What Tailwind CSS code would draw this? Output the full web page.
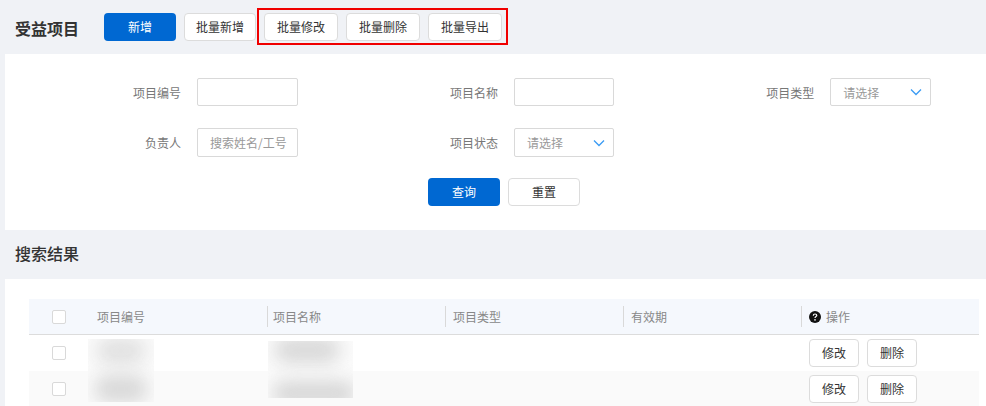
<!DOCTYPE html>
<html lang="zh-CN">
<head>
    <meta charset="utf-8">
    <meta name="viewport" content="width=device-width, initial-scale=1.0">
    <title>受益项目</title>
    <script src="https://cdn.jsdelivr.net/npm/@tailwindcss/browser@4"></script>
</head>
<body class="h-[406px] overflow-hidden bg-[#f0f2f6] font-['Noto_Sans_CJK_SC','Liberation_Sans',sans-serif] text-xs text-[#333]">

<!-- 受益项目 header -->
<header class="flex h-[54px] items-start">
    <h1 class="ml-[15px] mt-[17px] w-[89px] text-base leading-[22px] font-bold text-[#333]">受益项目</h1>
    <button class="mt-[13px] h-[28px] w-[72px] rounded-[4px] bg-[#0068d2] text-white">新增</button>
    <button class="ml-[8px] mt-[13px] h-[28px] w-[72px] rounded-[4px] border border-[#dcdcdc] bg-white">批量新增</button>
    <div class="ml-[1px] mt-[8px] flex h-[37px] w-[251px] gap-[8px] border-2 border-[#f00000] pl-[5px] pt-[3px]">
        <button class="h-[28px] w-[74px] rounded-[4px] border border-[#dcdcdc] bg-white">批量修改</button>
        <button class="h-[28px] w-[74px] rounded-[4px] border border-[#dcdcdc] bg-white">批量删除</button>
        <button class="h-[28px] w-[74px] rounded-[4px] border border-[#dcdcdc] bg-white">批量导出</button>
    </div>
</header>

<!-- 查询表单 -->
<section class="ml-[5px] h-[176px] bg-white pt-[24px]">
    <div class="grid grid-cols-[293px_317px_316px] grid-rows-[28px_29px] gap-y-[22px]">
        <div class="flex items-center">
            <label class="w-[176px] pt-[1px] text-right text-[#777]">项目编号</label>
            <input class="ml-[16px] h-[28px] w-[101px] rounded-[2px] border border-[#d9d9d9] bg-white">
        </div>
        <div class="flex items-center">
            <label class="w-[200px] pt-[1px] text-right text-[#777]">项目名称</label>
            <input class="ml-[16px] h-[28px] w-[100px] rounded-[2px] border border-[#d9d9d9] bg-white">
        </div>
        <div class="flex items-center">
            <label class="w-[200px] pt-[1px] text-right text-[#777]">项目类型</label>
            <div class="ml-[16px] flex h-[28px] w-[101px] items-center justify-between rounded-[2px] border border-[#d9d9d9] pl-[12px] pr-[8px] text-[#999]">
                <span class="pt-[1px]">请选择</span>
                <svg width="12" height="8" viewBox="0 0 12 8" fill="none" stroke="#3a9bf4" stroke-width="1.3"><path d="M1 1.5 L6 6.5 L11 1.5"/></svg>
            </div>
        </div>
        <div class="flex items-center">
            <label class="w-[176px] text-right text-[#777]">负责人</label>
            <input class="ml-[16px] h-[29px] w-[101px] rounded-[2px] border border-[#d9d9d9] bg-white pl-[12px] text-xs placeholder:text-[#999]" placeholder="搜索姓名/工号">
        </div>
        <div class="flex items-center">
            <label class="w-[200px] text-right text-[#777]">项目状态</label>
            <div class="ml-[16px] flex h-[29px] w-[100px] items-center justify-between rounded-[2px] border border-[#d9d9d9] pl-[12px] pr-[8px] text-[#999]">
                <span>请选择</span>
                <svg width="12" height="8" viewBox="0 0 12 8" fill="none" stroke="#3a9bf4" stroke-width="1.3"><path d="M1 1.5 L6 6.5 L11 1.5"/></svg>
            </div>
        </div>
    </div>
    <div class="mt-[21px] flex gap-[8px] pl-[423px]">
        <button class="h-[28px] w-[72px] rounded-[4px] bg-[#0068d2] text-white">查询</button>
        <button class="h-[28px] w-[72px] rounded-[4px] border border-[#dcdcdc] bg-white">重置</button>
    </div>
</section>

<!-- 搜索结果 -->
<div class="flex h-[49px] items-start pl-[15px] pt-[12px]">
    <h2 class="text-base leading-[22px] font-medium text-[#333]">搜索结果</h2>
</div>

<section class="relative ml-[5px] h-[127px] bg-white pl-[24px] pr-[7px] pt-[20px]">
    <div class="grid h-[36px] grid-cols-[68px_170px_178px_178px_178px_178px] items-center border-b border-[#dcdcdc] bg-[#f5f8fd] text-[#888]">
        <div class="pl-[23px]"><span class="block h-[14px] w-[14px] rounded-[2px] border border-[#d9d9d9] bg-white"></span></div>
        <div>项目编号</div>
        <div class="flex h-[21px] items-center border-l border-[#d9d9d9] pl-[5px]">项目名称</div>
        <div class="flex h-[21px] items-center border-l border-[#d9d9d9] pl-[7px]">项目类型</div>
        <div class="flex h-[21px] items-center border-l border-[#d9d9d9] pl-[7px]">有效期</div>
        <div class="flex h-[21px] items-center gap-[5px] border-l border-[#d9d9d9] pl-[7px]">
            <svg width="12" height="12" viewBox="0 0 12 12"><circle cx="6" cy="6" r="6" fill="#111"/><path d="M4.3 4.7 C4.3 3.6 5 3 6 3 C7 3 7.8 3.6 7.8 4.5 C7.8 5.6 6 5.6 6 7" fill="none" stroke="#fff" stroke-width="1.2"/><circle cx="6" cy="8.9" r="0.8" fill="#fff"/></svg>
            <span>操作</span>
        </div>
    </div>
    <div class="grid h-[36px] grid-cols-[772px_178px] items-center bg-white">
        <div class="pl-[23px]"><span class="block h-[14px] w-[14px] rounded-[2px] border border-[#d9d9d9] bg-white"></span></div>
        <div class="flex gap-[8px] pl-[8px]">
            <button class="h-[28px] w-[50px] rounded-[4px] border border-[#dcdcdc] bg-white">修改</button>
            <button class="h-[28px] w-[50px] rounded-[4px] border border-[#dcdcdc] bg-white">删除</button>
        </div>
    </div>
    <div class="grid h-[36px] grid-cols-[772px_178px] items-center bg-[#fafafa]">
        <div class="pl-[23px]"><span class="block h-[14px] w-[14px] rounded-[2px] border border-[#d9d9d9] bg-white"></span></div>
        <div class="flex gap-[8px] pl-[8px]">
            <button class="h-[28px] w-[50px] rounded-[4px] border border-[#dcdcdc] bg-white">修改</button>
            <button class="h-[28px] w-[50px] rounded-[4px] border border-[#dcdcdc] bg-white">删除</button>
        </div>
    </div>

    <!-- 打码区域 -->
    <div class="absolute left-[83px] top-[60px] h-[63px] w-[66px] overflow-hidden bg-[#fbfbfb]">
        <div class="absolute left-[8px] top-[-1px] h-[26px] w-[50px] rounded-full bg-[#e0e0e0] blur-[9px]"></div>
        <div class="absolute left-[6px] top-[36px] h-[28px] w-[54px] rounded-full bg-[#d8d8d8] blur-[9px]"></div>
    </div>
    <div class="absolute left-[263px] top-[62px] h-[57px] w-[85px] overflow-hidden bg-[#fbfbfb]">
        <div class="absolute left-[6px] top-[-4px] h-[26px] w-[66px] rounded-full bg-[#d8d8d8] blur-[9px]"></div>
        <div class="absolute left-[4px] top-[40px] h-[24px] w-[84px] rounded-full bg-[#d6d6d6] blur-[9px]"></div>
    </div>
</section>

</body>
</html>
